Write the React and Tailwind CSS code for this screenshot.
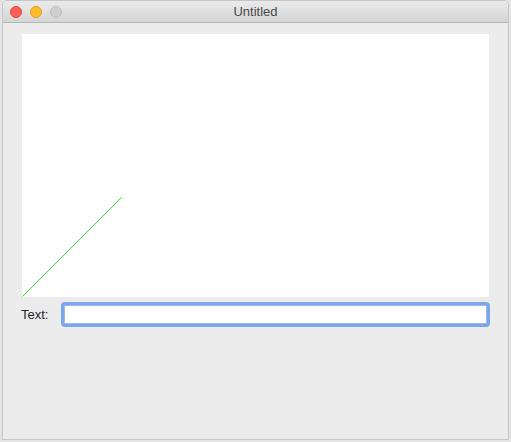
export default function App() {
  return (
    <div className="w-[511px] h-[442px] bg-[#e4e4e4] font-['Helvetica','Liberation_Sans',sans-serif]">
      <div className="ml-[2px] w-[507px] h-[440px] flex flex-col bg-[#ececec] border border-[#c6c6c6] rounded-t-[5px] overflow-hidden">
        {/* Title bar */}
        <div className="relative h-[22px] flex items-center bg-gradient-to-b from-[#ebebeb] to-[#d5d5d5] border-b border-[#b5b5b5]">
          <div className="flex items-center gap-[8px] pl-[7px]">
            <span className="w-[12px] h-[12px] rounded-full bg-[#fc5f57] border border-[#e2463f]" />
            <span className="w-[12px] h-[12px] rounded-full bg-[#fdbc2e] border border-[#e1a116]" />
            <span className="w-[12px] h-[12px] rounded-full bg-[#d0d0d0] border border-[#bdbdbd]" />
          </div>
          <div className="absolute inset-0 flex items-center justify-center text-[13px] text-[#4a4a4a]">
            Untitled
          </div>
        </div>

        {/* Content */}
        <div className="pl-[19px] pr-[18px] pt-[11px]">
          <div className="w-[467px] h-[263px] bg-white">
            <svg width="467" height="263" viewBox="0 0 467 263">
              <line x1="0.5" y1="262.5" x2="99.5" y2="163.5" stroke="#22dd22" strokeWidth="1" />
            </svg>
          </div>
          <div className="mt-[5px] -ml-px flex items-center">
            <span className="w-[40px] text-[13px] text-[#262626]">Text:</span>
            <div className="w-[430px] h-[25px] rounded-[4px] bg-[#7ca6ea] p-[3px]">
              <div className="w-full h-full bg-white rounded-[1px] border border-[#9bb9ea]" />
            </div>
          </div>
        </div>
      </div>
    </div>
  );
}
